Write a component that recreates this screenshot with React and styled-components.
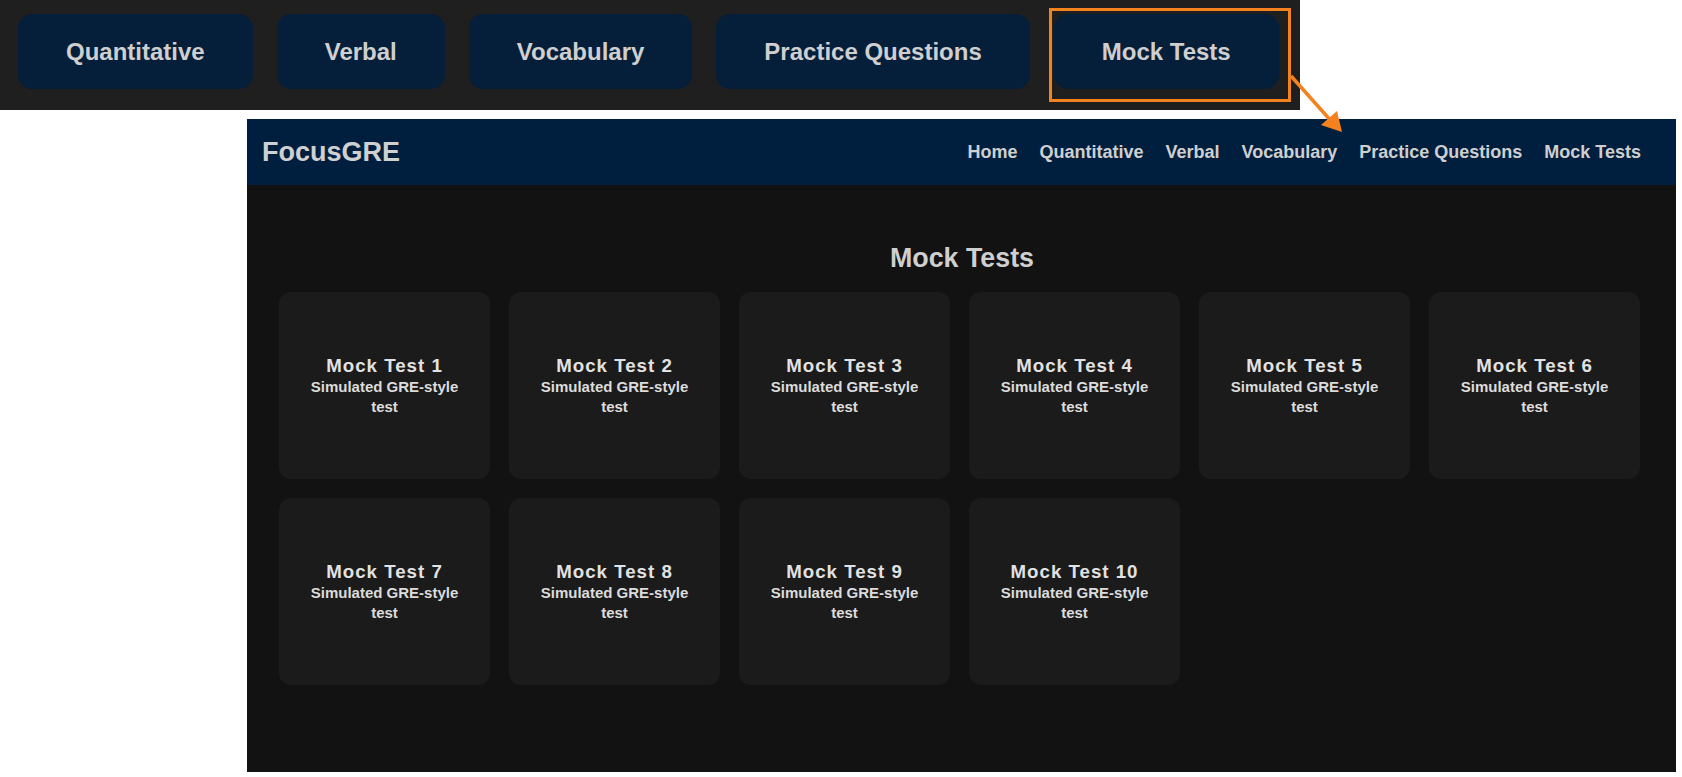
import React from "react";
import styled, { createGlobalStyle } from "styled-components";

const GlobalStyle = createGlobalStyle`
  html, body {
    margin: 0;
    padding: 0;
    background: #ffffff;
    font-family: "Liberation Sans", Arial, sans-serif;
  }
`;

const Canvas = styled.div`
  position: relative;
  width: 1682px;
  height: 777px;
  display: flex;
  flex-direction: column;
  overflow: hidden;
`;

const TopStrip = styled.div`
  width: 1300px;
  height: 110px;
  box-sizing: border-box;
  background: #1f1f1f;
  display: flex;
  align-items: flex-start;
  gap: 24px;
  padding: 14px 0 0 18px;
`;

const BigButton = styled.div`
  height: 75px;
  padding: 0 48px;
  box-sizing: border-box;
  display: flex;
  align-items: center;
  justify-content: center;
  background: #051f3a;
  border-radius: 14px;
  color: #cfcfcf;
  font-size: 24px;
  font-weight: 700;
  white-space: nowrap;
`;

const Highlight = styled.div`
  position: absolute;
  left: 1049px;
  top: 8px;
  width: 242px;
  height: 94px;
  box-sizing: border-box;
  border: 3px solid #f4821f;
`;

const ArrowSvg = styled.svg`
  position: absolute;
  left: 1280px;
  top: 68px;
  overflow: visible;
`;

const Shot = styled.div`
  margin: 9px 0 0 247px;
  width: 1429px;
  height: 653px;
  display: flex;
  flex-direction: column;
  background: #121212;
`;

const NavBar = styled.div`
  height: 66px;
  flex-shrink: 0;
  box-sizing: border-box;
  background: #001f3f;
  display: flex;
  align-items: center;
  justify-content: space-between;
  padding: 0 35px 0 15px;
`;

const Logo = styled.div`
  color: #d0d0d0;
  font-size: 27px;
  font-weight: 700;
`;

const NavLinks = styled.nav`
  display: flex;
  gap: 22px;
`;

const NavLink = styled.span`
  color: #cfcfcf;
  font-size: 18px;
  font-weight: 700;
`;

const Main = styled.div`
  flex: 1;
  padding: 58px 31px 0 32px;
`;

const Heading = styled.h2`
  margin: 0 0 19px;
  text-align: center;
  color: #cfcfcf;
  font-size: 26.8px;
  line-height: 30px;
  font-weight: 700;
`;

const Grid = styled.div`
  display: grid;
  grid-template-columns: repeat(6, 211px);
  gap: 19px;
`;

const Card = styled.div`
  height: 187px;
  box-sizing: border-box;
  padding: 0 22px;
  background: #1b1b1b;
  border-radius: 12px;
  display: flex;
  flex-direction: column;
  align-items: center;
  justify-content: center;
  text-align: center;
`;

const CardTitle = styled.div`
  color: #e2e2e2;
  font-size: 18.7px;
  font-weight: 700;
  letter-spacing: 1px;
  line-height: 22px;
`;

const CardText = styled.div`
  color: #dcdcdc;
  font-size: 15px;
  font-weight: 700;
  line-height: 20px;
`;

const topButtons = [
  "Quantitative",
  "Verbal",
  "Vocabulary",
  "Practice Questions",
  "Mock Tests",
];

const navItems = [
  "Home",
  "Quantitative",
  "Verbal",
  "Vocabulary",
  "Practice Questions",
  "Mock Tests",
];

const tests = Array.from({ length: 10 }, (_, i) => i + 1);

function App() {
  return (
    <>
      <GlobalStyle />
      <Canvas>
        <TopStrip>
          {topButtons.map((label) => (
            <BigButton key={label}>{label}</BigButton>
          ))}
        </TopStrip>

        <Shot>
          <NavBar>
            <Logo>FocusGRE</Logo>
            <NavLinks>
              {navItems.map((item) => (
                <NavLink key={item}>{item}</NavLink>
              ))}
            </NavLinks>
          </NavBar>
          <Main>
            <Heading>Mock Tests</Heading>
            <Grid>
              {tests.map((n) => (
                <Card key={n}>
                  <CardTitle>Mock Test {n}</CardTitle>
                  <CardText>Simulated GRE-style test</CardText>
                </Card>
              ))}
            </Grid>
          </Main>
        </Shot>

        {/* callout drawn over both screenshots */}
        <Highlight />
        <ArrowSvg width="70" height="70" viewBox="0 0 70 70">
          <line x1="11" y1="8" x2="52" y2="54" stroke="#f4821f" strokeWidth="3.5" />
          <polygon points="62,64 41,57 57,43" fill="#f4821f" />
        </ArrowSvg>
      </Canvas>
    </>
  );
}

export default App;
